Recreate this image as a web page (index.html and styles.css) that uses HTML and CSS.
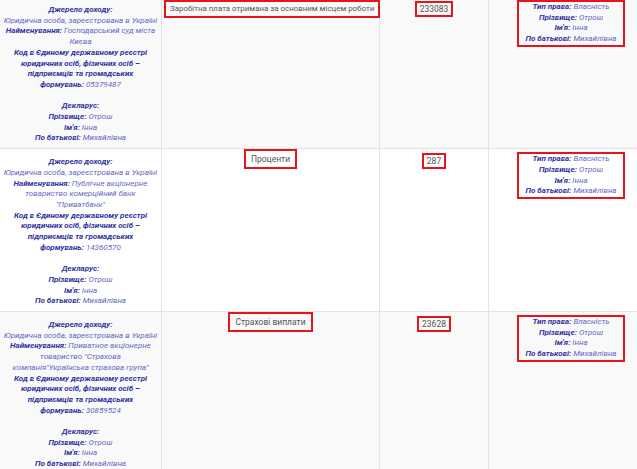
FILE: index.html
```html
<!DOCTYPE html>
<html lang="uk">
<head>
<meta charset="utf-8">
<link rel="stylesheet" href="styles.css">
</head>
<body>
<div class="table">
  <div class="row alt">
    <div class="cell src">
      <b>Джерело доходу:</b><br>
      Юридична особа, зареєстрована в Україні<br>
      <b>Найменування:</b> Господарський суд міста<br>Києва<br>
      <b>Код в Єдиному державному реєстрі<br>юридичних осіб, фізичних осіб –<br>підприємців та громадських<br>формувань:</b> 05379487<br>
      <br>
      <b>Декларус:</b><br>
      <b>Прізвище:</b> Отрош<br>
      <b>Ім'я:</b> Інна<br>
      <b>По батькові:</b> Михайлівна
    </div>
    <div class="cell kind"><span class="box wide">Заробітна плата отримана за основним місцем роботи</span></div>
    <div class="cell sum"><span class="box num">233083</span></div>
    <div class="cell right"><div class="box own">
      <b>Тип права:</b> Власність<br>
      <b>Прізвище:</b> Отрош<br>
      <b>Ім'я:</b> Інна<br>
      <b>По батькові:</b> Михайлівна
    </div></div>
  </div>
  <div class="row">
    <div class="cell src">
      <b>Джерело доходу:</b><br>
      Юридична особа, зареєстрована в Україні<br>
      <b>Найменування:</b> Публічне акціонерне<br>товариство комерційний банк<br>"Приватбанк"<br>
      <b>Код в Єдиному державному реєстрі<br>юридичних осіб, фізичних осіб –<br>підприємців та громадських<br>формувань:</b> 14360570<br>
      <br>
      <b>Декларус:</b><br>
      <b>Прізвище:</b> Отрош<br>
      <b>Ім'я:</b> Інна<br>
      <b>По батькові:</b> Михайлівна
    </div>
    <div class="cell kind"><span class="box">Проценти</span></div>
    <div class="cell sum"><span class="box num">287</span></div>
    <div class="cell right"><div class="box own">
      <b>Тип права:</b> Власність<br>
      <b>Прізвище:</b> Отрош<br>
      <b>Ім'я:</b> Інна<br>
      <b>По батькові:</b> Михайлівна
    </div></div>
  </div>
  <div class="row alt">
    <div class="cell src">
      <b>Джерело доходу:</b><br>
      Юридична особа, зареєстрована в Україні<br>
      <b>Найменування:</b> Приватное акціонерне<br>товариство "Страхова<br>компанія"Українська страхова група"<br>
      <b>Код в Єдиному державному реєстрі<br>юридичних осіб, фізичних осіб –<br>підприємців та громадських<br>формувань:</b> 30859524<br>
      <br>
      <b>Декларус:</b><br>
      <b>Прізвище:</b> Отрош<br>
      <b>Ім'я:</b> Інна<br>
      <b>По батькові:</b> Михайлівна
    </div>
    <div class="cell kind"><span class="box">Страхові виплати</span></div>
    <div class="cell sum"><span class="box num">23628</span></div>
    <div class="cell right"><div class="box own">
      <b>Тип права:</b> Власність<br>
      <b>Прізвище:</b> Отрош<br>
      <b>Ім'я:</b> Інна<br>
      <b>По батькові:</b> Михайлівна
    </div></div>
  </div>
</div>
</body>
</html>
```
FILE: styles.css
```css
html, body {
  margin: 0;
  padding: 0;
  background: #ffffff;
  overflow: hidden;
}
body {
  width: 637px;
  height: 469px;
  font-family: Roboto, "Liberation Sans", sans-serif;
  font-size: 8px;
}
.table {
  width: 654px;
  margin-top: -3px;
}
.row {
  display: grid;
  grid-template-columns: 162px 218px 109px 165px;
  border-bottom: 1px solid #e4e4e4;
  background: #ffffff;
}
.row.alt {
  background: #f9f9f9;
}
.cell {
  border-right: 1px solid #e4e4e4;
  text-align: center;
}
.src {
  padding: 8px 0 4px 0;
  font-style: italic;
  line-height: 10.7px;
  color: #6767c4;
  white-space: nowrap;
}
.src b, .own b {
  color: #3434a2;
  font-weight: 700;
}
.kind {
  padding: 0 2px;
  font-size: 8.5px;
}
.sum {
  padding: 4px 2px 0;
  font-size: 8.5px;
}
.right {
  padding: 3px 2px 0;
}
.box {
  display: inline-block;
  border: 2px solid #e8141c;
  color: #555555;
  line-height: 12px;
  padding: 2px 5px;
  white-space: nowrap;
}
.box.wide {
  font-size: 7.9px;
  padding: 1px 4px;
  margin-top: 3px;
}
.box.num {
  padding: 0 3px;
}
.box.own {
  font-style: italic;
  line-height: 10.7px;
  color: #6767c4;
  padding: 0 6px;
}
```
